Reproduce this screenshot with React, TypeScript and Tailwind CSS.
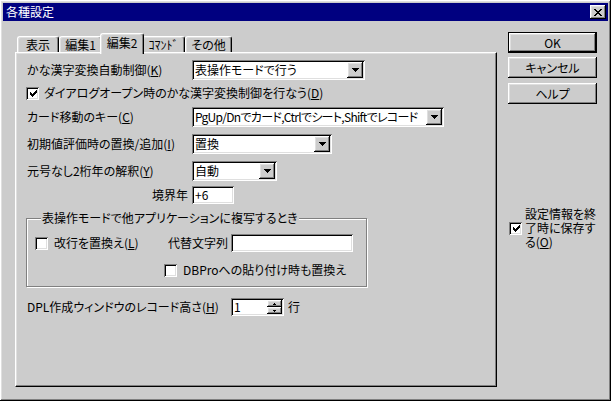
import type { ReactNode } from 'react'

const raised =
  'shadow-[inset_-1px_-1px_#000000,inset_1px_1px_#ffffff,inset_-2px_-2px_#808080,inset_2px_2px_#dfdfdf]'
const sunken =
  'shadow-[inset_1px_1px_#808080,inset_-1px_-1px_#ffffff,inset_2px_2px_#000000,inset_-2px_-2px_#dfdfdf]'

function Pixels({ rows, className }: { rows: string[]; className?: string }) {
  const w = rows[0].length
  const h = rows.length
  return (
    <svg width={w} height={h} viewBox={`0 0 ${w} ${h}`} shapeRendering="crispEdges" className={className}>
      {rows.flatMap((row, y) =>
        row.split('').map((c, x) => (c === 'X' ? <rect key={`${x}-${y}`} x={x} y={y} width={1} height={1} fill="#000" /> : null)),
      )}
    </svg>
  )
}

const checkMark = ['......X', '.....XX', 'X...XXX', 'XX.XXX.', 'XXXXX..', '.XXX...', '..X....']
const closeX = ['XX....XX', '.XX..XX.', '..XXXX..', '...XX...', '..XXXX..', '.XX..XX.', 'XX....XX']
const downArrow = ['XXXXXXX', '.XXXXX.', '..XXX..', '...X...']
const spinUp = ['..X..', '.XXX.']
const spinDown = ['.XXX.', '..X..']

function CheckBox({ checked }: { checked?: boolean }) {
  return (
    <span className={`flex h-[13px] w-[13px] shrink-0 items-center justify-center bg-white ${sunken}`}>
      {checked && <Pixels rows={checkMark} className="ml-[1px]" />}
    </span>
  )
}

function Combo({ width, value, tight }: { width: number; value: string; tight?: boolean }) {
  return (
    <div style={{ width }} className={`flex h-[20px] shrink-0 items-center bg-white pl-[3px] pr-[2px] ${sunken}`}>
      <span className={`flex-1 whitespace-nowrap ${tight ? 'tracking-[-0.7px]' : ''}`}>{value}</span>
      <span className={`flex h-[16px] w-[16px] shrink-0 items-center justify-center bg-[#cccccc] ${raised}`}>
        <Pixels rows={downArrow} />
      </span>
    </div>
  )
}

function Field({ className, children }: { className: string; children?: ReactNode }) {
  return <div className={`flex h-[18px] shrink-0 items-center bg-white pl-[3px] ${sunken} ${className}`}>{children}</div>
}

function Tab({ label, width, active }: { label: string; width: number; active?: boolean }) {
  return (
    <div
      style={{ width: active ? width + 4 : width }}
      className={`flex items-center justify-center whitespace-nowrap rounded-t-[3px] border-l border-r border-t border-l-white border-r-black border-t-white bg-[#cccccc] shadow-[inset_-1px_0_#808080,inset_1px_1px_#dfdfdf] ${
        active ? 'relative z-10 -mx-[2px] -mb-[2px] h-[21px] pb-[3px]' : 'h-[16px] pt-[1px]'
      }`}
    >
      {label}
    </div>
  )
}

function Button({ label, primary }: { label: string; primary?: boolean }) {
  return (
    <div className={`h-[21px] w-[89px] ${primary ? 'border border-black' : ''}`}>
      <div className={`flex h-full w-full items-center justify-center ${raised}`}>{label}</div>
    </div>
  )
}

export default function App() {
  return (
    <div className="h-[401px] w-[611px] bg-[#cccccc] font-['Noto_Sans_CJK_JP','Noto_Sans',sans-serif] text-[12px] leading-none text-black [font-feature-settings:'palt']">
      <div className={`flex h-full w-full flex-col p-[3px] ${raised}`}>
        <div className="flex h-[18px] shrink-0 items-center justify-between bg-[#000080] pl-[3px] pr-[2px] text-white">
          <span>各種設定</span>
          <span className={`flex h-[14px] w-[16px] items-center justify-center bg-[#cccccc] ${raised}`}>
            <Pixels rows={closeX} />
          </span>
        </div>

        <div className="flex pl-[12px] pt-[12px]">
          <div className="flex w-[482px] flex-col">
            <div className="flex h-[19px] items-end pl-[2px]">
              <Tab label="表示" width={42} />
              <Tab label="編集1" width={43} />
              <Tab label="編集2" width={40} active />
              <Tab label="ｺﾏﾝﾄﾞ" width={43} />
              <Tab label="その他" width={47} />
            </div>

            <div className="flex h-[335px] flex-col border border-b-black border-l-white border-r-black border-t-white pl-[11px] pt-[7px] shadow-[inset_-1px_-1px_#808080,inset_1px_1px_#dfdfdf]">
              <div className="flex h-[20px] items-center">
                <span className="w-[165px]">
                  かな漢字変換自動制御(<u>K</u>)
                </span>
                <Combo width={173} value="表操作モードで行う" />
              </div>

              <div className="-ml-[1px] mt-[3px] flex h-[20px] items-center gap-[5px]">
                <CheckBox checked />
                <span>
                  ダイアログオープン時のかな漢字変換制御を行なう(<u>D</u>)
                </span>
              </div>

              <div className="mt-[4px] flex h-[20px] items-center">
                <span className="w-[165px]">
                  カード移動のキー(<u>C</u>)
                </span>
                <Combo width={252} value="PgUp/Dnでカード,Ctrlでシート,Shiftでレコード" tight />
              </div>

              <div className="mt-[7px] flex h-[20px] items-center">
                <span className="w-[165px]">
                  初期値評価時の置換/追加(<u>I</u>)
                </span>
                <Combo width={140} value="置換" />
              </div>

              <div className="mt-[7px] flex h-[20px] items-center">
                <span className="w-[165px]">
                  元号なし2桁年の解釈(<u>Y</u>)
                </span>
                <Combo width={85} value="自動" />
              </div>

              <div className="mt-[5px] flex h-[18px] items-center">
                <span className="w-[165px] pr-[4px] text-right">境界年</span>
                <Field className="w-[42px]">+6</Field>
              </div>

              <fieldset className="-ml-[1px] mt-[6px] w-[341px] border border-[#808080] pb-[9px] pl-[8px] shadow-[1px_1px_0_#ffffff,inset_1px_1px_0_#ffffff]">
                <legend className="ml-[6px] bg-[#cccccc] px-[1px] leading-[16px]">
                  表操作モードで他アプリケーションに複写するとき
                </legend>
                <div className="mt-[8px] flex h-[18px] items-center">
                  <div className="flex w-[133px] items-center gap-[6px]">
                    <CheckBox />
                    <span>
                      改行を置換え(<u>L</u>)
                    </span>
                  </div>
                  <span className="w-[63px]">代替文字列</span>
                  <Field className="w-[122px]" />
                </div>
                <div className="ml-[129px] mt-[11px] flex h-[14px] items-center gap-[6px]">
                  <CheckBox />
                  <span>DBProへの貼り付け時も置換え</span>
                </div>
              </fieldset>

              <div className="mt-[11px] flex h-[18px] items-center">
                <span className="w-[204px]">
                  DPL作成ウィンドウのレコード高さ(<u>H</u>)
                </span>
                <Field className="w-[53px] pr-[2px]">
                  <span className="flex-1">1</span>
                  <span className="flex h-[14px] w-[15px] flex-col">
                    <span className={`flex h-[7px] items-center justify-center bg-[#cccccc] ${raised}`}>
                      <Pixels rows={spinUp} />
                    </span>
                    <span className={`flex h-[7px] items-center justify-center bg-[#cccccc] ${raised}`}>
                      <Pixels rows={spinDown} />
                    </span>
                  </span>
                </Field>
                <span className="ml-[4px]">行</span>
              </div>
            </div>
          </div>

          <div className="-mt-[1px] ml-[11px] flex flex-col">
            <Button label="OK" primary />
            <div className="mt-[4px]">
              <Button label="キャンセル" />
            </div>
            <div className="mt-[5px]">
              <Button label="ヘルプ" />
            </div>
            <div className="ml-[1px] mt-[103px] flex items-center gap-[3px]">
              <CheckBox checked />
              <span className="w-[74px] leading-[14px]">
                設定情報を終了時に保存する(<u>O</u>)
              </span>
            </div>
          </div>
        </div>
      </div>
    </div>
  )
}
